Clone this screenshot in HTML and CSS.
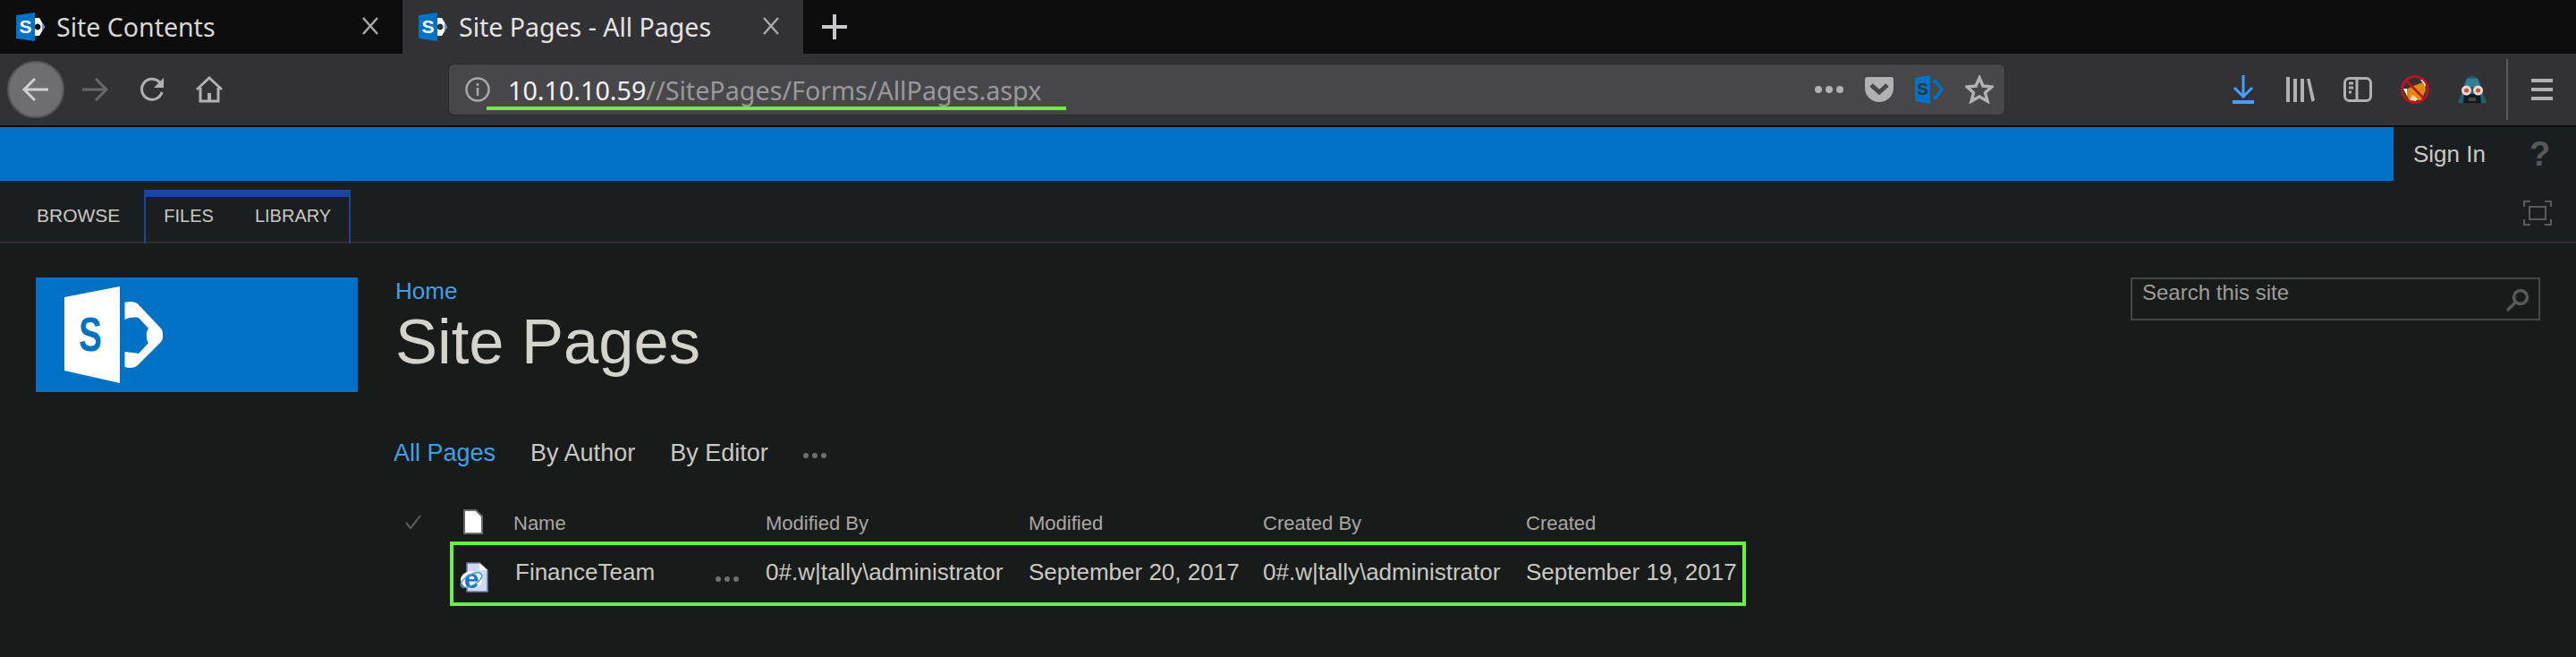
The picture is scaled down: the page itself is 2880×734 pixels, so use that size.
FILE: index.html
```html
<!DOCTYPE html>
<html lang="en">
<head>
    <meta charset="UTF-8">
    <title>Site Pages - All Pages</title>
    <link rel="stylesheet" href="styles.css">
</head>
<body>

    <!-- Tabs -->
    <div class="tabs">
        <div class="tab">
            <svg class="fav" width="32" height="32" viewBox="0 0 32 32">
                <path d="M21 6h5l6 10-6 10h-5zM24 12.500a3.500 3.500 0 1 0 .01 0z" fill="#fff" fill-rule="evenodd" stroke="none"/>
                <path d="M29 11l3 5-3 5z" fill="#4f9bd6" stroke="none"/>
                <path d="M0 3 21 0v32L0 29z" fill="#0072c6" stroke="none"/>
                <text x="10.500" y="23" class="fav-letter">S</text>
            </svg>
            <span class="tab-title">Site Contents</span>
            <svg class="tab-close" width="20" height="20" viewBox="0 0 20 20"><path d="M2 1l16 18M18 1 2 19"/></svg>
        </div>
        <div class="tab tab-active">
            <svg class="fav" width="32" height="32" viewBox="0 0 32 32">
                <path d="M21 6h5l6 10-6 10h-5zM24 12.500a3.500 3.500 0 1 0 .01 0z" fill="#fff" fill-rule="evenodd" stroke="none"/>
                <path d="M29 11l3 5-3 5z" fill="#4f9bd6" stroke="none"/>
                <path d="M0 3 21 0v32L0 29z" fill="#0072c6" stroke="none"/>
                <text x="10.500" y="23" class="fav-letter">S</text>
            </svg>
            <span class="tab-title">Site Pages - All Pages</span>
            <svg class="tab-close" width="20" height="20" viewBox="0 0 20 20"><path d="M2 1l16 18M18 1 2 19"/></svg>
        </div>
        <svg class="new-tab" width="30" height="30" viewBox="0 0 30 30"><path d="M15 1v28M1 15h28"/></svg>
    </div>

    <!-- Toolbar -->
    <div class="toolbar">
        <div class="tool tool-back">
            <svg width="32" height="32" viewBox="0 0 32 32"><path d="M30 16H4M15 4 3 16l12 12"/></svg>
        </div>
        <div class="tool tool-forward">
            <svg width="32" height="32" viewBox="0 0 32 32"><path d="M2 16h26M17 4l12 12-12 12"/></svg>
        </div>
        <div class="tool">
            <svg width="32" height="32" viewBox="0 0 32 32"><path d="M27 19a11.500 11.500 0 1 1-3-11.500L28 11"/><path class="solid" d="M29 3v11H18z"/></svg>
        </div>
        <div class="tool">
            <svg width="32" height="32" viewBox="0 0 32 32"><path d="M2 16 16 3l14 13"/><path d="M6 14v15h20V14"/><path class="solid" d="M14 20h4v9h-4z"/></svg>
        </div>

        <div class="urlbar">
            <svg class="url-info" width="28" height="28" viewBox="0 0 28 28"><circle cx="14" cy="14" r="12.500"/><path d="M14 12v9M14 7v3"/></svg>
            <div class="url-text"><span class="url-host">10.10.10.59</span>//SitePages/Forms/AllPages.aspx</div>
            <div class="url-mark"></div>
            <div class="url-action">
                <svg width="32" height="12" viewBox="0 0 32 12"><circle class="dot" cx="4" cy="6" r="4"/><circle class="dot" cx="16" cy="6" r="4"/><circle class="dot" cx="28" cy="6" r="4"/></svg>
            </div>
            <div class="url-action">
                <svg width="32" height="28" viewBox="0 0 32 28"><path class="pocket" d="M3 0h26a3 3 0 0 1 3 3v9C32 22 24 28 16 28S0 22 0 12V3a3 3 0 0 1 3-3z"/><path class="pocket-mark" d="M7 9l9 8 9-8"/></svg>
            </div>
            <div class="url-action">
                <svg width="32" height="32" viewBox="0 0 32 32">
                    <path d="M0 3 17 0v32L0 29z" fill="#0072c6" stroke="none"/>
                    <text x="8.500" y="22" class="url-letter">S</text>
                    <path d="M20 7h3l7 9-7 9h-3" stroke="#0072c6" stroke-width="3.500"/>
                </svg>
            </div>
            <div class="url-action">
                <svg width="32" height="32" viewBox="0 0 32 32"><path class="star" d="M16 3l4 9 10 1-7.500 6.500L25 29l-9-5-9 5 2.500-9.500L2 13l10-1z"/></svg>
            </div>
        </div>

        <div class="tool tool-first">
            <svg class="icon-download" width="24" height="32" viewBox="0 0 24 32"><path d="M12 0v25M2 14l10 10 10-10"/><path class="bar" d="M0 28h24v4H0z"/></svg>
        </div>
        <div class="tool">
            <svg width="32" height="28" viewBox="0 0 32 28"><path class="solid" d="M0 0h4v28H0zM8 2h4v26H8zM16 2h4v26h-4zM23 2h3.500L32 26l-3.500 2z"/></svg>
        </div>
        <div class="tool">
            <svg width="32" height="28" viewBox="0 0 32 28"><rect x="1.500" y="1.500" width="29" height="25" rx="5"/><path d="M15 2v24M6 7h5M6 12h5M6 17h3"/></svg>
        </div>
        <div class="tool">
            <svg width="32" height="32" viewBox="0 0 32 32">
                <path d="M6 16l8-4 8-3 5-1 1 9-5 11H10l-4-6z" fill="#e0890f" stroke="none"/>
                <path d="M3 15h4v8zM22 5h5l1 8z" fill="#fff" stroke="none"/>
                <path d="M10 28l3-6 6 4-2 3z" fill="#f3d9b0" stroke="none"/>
                <circle class="ban" cx="16" cy="16" r="14.500"/>
                <path class="ban" d="M6 6l20 20"/>
            </svg>
        </div>
        <div class="tool">
            <svg width="32" height="30" viewBox="0 0 32 30">
                <path d="M16 0c5 0 8 4 9 10l7 20H0l7-20c1-6 4-10 9-10z" fill="#1f5f70" stroke="none"/>
                <path d="M10 3h12l3 9H7z" fill="#2f7f92" stroke="none"/>
                <path d="M7 20h18l1 10H6z" fill="#15191c" stroke="none"/>
                <path d="M12 24h8v4h-8z" fill="#3c4a50" stroke="none"/>
                <circle cx="9.500" cy="16" r="5.500" fill="#f4d8d0" stroke="none"/>
                <circle cx="22.500" cy="16" r="5.500" fill="#f4d8d0" stroke="none"/>
                <circle cx="9.500" cy="16" r="2.500" fill="#c8503c" stroke="none"/>
                <circle cx="22.500" cy="16" r="2.500" fill="#c8503c" stroke="none"/>
            </svg>
        </div>
        <div class="tool-sep"></div>
        <div class="tool tool-menu">
            <svg width="24" height="24" viewBox="0 0 24 24"><path class="solid" d="M0 0h24v4H0zM0 10h24v4H0zM0 20h24v4H0z"/></svg>
        </div>
    </div>

    <!-- Sharepoint -->
    <div class="top-bar">
        <div class="suite-bar"></div>
        <div class="signin">
            <span>Sign In</span>
            <span class="help">?</span>
        </div>
    </div>

    <div class="ribbon">
        <a class="ribbon-tab">BROWSE</a>
        <div class="ribbon-group">
            <a class="ribbon-tab">FILES</a>
            <a class="ribbon-tab">LIBRARY</a>
        </div>
        <svg class="focus-icon" width="32" height="28" viewBox="0 0 32 28">
            <path d="M1 7V1h7M24 1h7v6M31 21v6h-7M8 27H1v-6"/>
            <rect x="7" y="7" width="18" height="14"/>
        </svg>
    </div>

    <div class="site-head">
        <div class="site-logo">
            <svg width="110" height="108" viewBox="0 0 110 108">
                <path d="M0 12 62 0v108L0 94z" fill="#fff" stroke="none"/>
                <text transform="translate(29 72) scale(.72 1)" class="logo-letter">S</text>
                <path d="M67.500 18c6-2 13-1 16 3L108 47c3 4 3 11 0 15L83 87c-3 4-10 5-15.500 3V73c6 1 12 1 15.500 2l11-12c-3-3-3-13 0-16L83 35c-3-1-10-1-15.500 2z" fill="#fff" stroke="none"/>
            </svg>
        </div>
        <div class="site-title">
            <a class="crumb">Home</a>
            <h1>Site Pages</h1>
        </div>
        <div class="site-search">
            <span>Search this site</span>
            <svg width="28" height="26" viewBox="0 0 28 26"><circle cx="17" cy="10" r="7.500"/><path d="M11 16 2 25"/></svg>
        </div>
    </div>

    <div class="views">
        <a class="view view-current">All Pages</a>
        <a class="view">By Author</a>
        <a class="view">By Editor</a>
        <span class="dots"></span>
    </div>

    <div class="list">
        <div class="row row-head">
            <svg class="check" width="18" height="16" viewBox="0 0 18 16"><path d="M1 9l5 6L17 1"/></svg>
            <svg class="doc" width="22" height="28" viewBox="0 0 22 28"><path d="M1 1h13l7 7v19H1z"/></svg>
            <span>Name</span>
            <span></span>
            <span>Modified By</span>
            <span>Modified</span>
            <span>Created By</span>
            <span>Created</span>
        </div>
        <div class="row row-item">
            <span></span>
            <svg class="page-icon" width="34" height="34" viewBox="0 0 34 34">
                <path d="M9 1h14l9 8v24H9z" fill="#cfdaf4" stroke="#6a78a8" stroke-width="1.500"/>
                <path d="M23 1v8h9z" fill="#fff"/>
                <ellipse cx="14" cy="20" rx="12" ry="10" fill="#fff"/>
                <text x="14" y="29" class="ie-letter">e</text>
                <ellipse cx="14" cy="20" rx="13" ry="6" transform="rotate(-30 14 20)" fill="none" stroke="#4a9be6" stroke-width="1.500"/>
            </svg>
            <a class="item-name">FinanceTeam</a>
            <span class="dots"></span>
            <span>0#.w|tally\administrator</span>
            <span>September 20, 2017</span>
            <span>0#.w|tally\administrator</span>
            <span>September 19, 2017</span>
            <div class="row-mark"></div>
        </div>
    </div>

</body>
</html>
```

FILE: styles.css
```css
/* General */
html, body {
    height: 734px;
    overflow: hidden;
}

body {
    margin: 0;
    background-color: #191b1b;
    color: #c9c8c3;
    font-family: "Liberation Sans", Arial, sans-serif;
    font-size: 26px;
}

svg {
    display: block;
    fill: none;
    stroke: #b1b1b3;
    stroke-width: 3;
}

.solid {
    fill: #b1b1b3;
    stroke: none;
}

.fav-letter {
    fill: #fff;
    stroke: none;
    font: bold 21px "Liberation Sans", sans-serif;
    text-anchor: middle;
}

.url-letter {
    fill: #2b3440;
    stroke: none;
    font: bold 19px "Liberation Sans", sans-serif;
    text-anchor: middle;
}

/* Tabs */
.tabs {
    display: flex;
    align-items: center;
    height: 60px;
    background-color: #0c0c0d;
}

.tab {
    display: flex;
    align-items: center;
    gap: 13px;
    width: 450px;
    height: 60px;
    padding: 0 26px 0 18px;
    box-sizing: border-box;
    color: #d7d7d8;
    font-family: "Noto Sans", sans-serif;
    font-size: 28.500px;
}

.tab + .tab {
    width: 448px;
}

.tab-active {
    background-color: #323234;
    color: #e4e4e5;
}

.tab-title {
    flex: 1;
}

.tab-close {
    margin-top: -2px;
    stroke: #a8a8aa;
    stroke-width: 2.500;
}

.new-tab {
    margin-left: 20px;
    stroke: #c8c8ca;
    stroke-width: 4;
}

/* Toolbar */
.toolbar {
    display: flex;
    align-items: center;
    height: 80px;
    padding-left: 8px;
    background-color: #323234;
    border-bottom: 2px solid #0c0c0d;
}

.tool {
    display: flex;
    align-items: center;
    justify-content: center;
    flex: none;
    width: 64px;
    height: 64px;
}

.tool-back {
    border-radius: 50%;
    background-color: #6e6e70;
    box-sizing: border-box;
    border: 2px solid #565658;
}

.tool-back svg {
    stroke: #d0d0d1;
}

.tool-forward {
    margin-left: 2px;
}

.tool-forward svg {
    stroke: #69696b;
}

.urlbar {
    position: relative;
    display: flex;
    align-items: center;
    flex: none;
    width: 1739px;
    height: 56px;
    margin-left: 236px;
    padding-left: 18px;
    box-sizing: border-box;
    background-color: #474749;
    border-radius: 6px;
    box-shadow: 0 0 0 1px #2a2a2c;
}

.url-info {
    stroke-width: 2.500;
    stroke: #a9a9ab;
}

.url-text {
    flex: 1;
    margin-left: 20px;
    color: #99999b;
    font-family: "Noto Sans", sans-serif;
    font-size: 28.700px;
}

.url-host {
    color: #f2f2f3;
}

.url-mark {
    position: absolute;
    left: 42px;
    top: 47px;
    width: 648px;
    height: 4px;
    background-color: #6bf13d;
}

.url-action {
    display: flex;
    align-items: center;
    justify-content: center;
    width: 56px;
    height: 56px;
}

.dot {
    fill: #b1b1b3;
    stroke: none;
}

.pocket {
    fill: #b1b1b3;
    stroke: none;
}

.pocket-mark {
    stroke: #474749;
    stroke-width: 5;
}

.star {
    stroke-width: 3.500;
}

.tool-first {
    margin-left: 235px;
}

.icon-download {
    stroke: #45a1ff;
}

.icon-download .bar {
    fill: #45a1ff;
    stroke: none;
}

.ban {
    stroke: #c4101c;
    stroke-width: 2.500;
}

.tool-sep {
    flex: none;
    width: 2px;
    height: 68px;
    margin-left: 6px;
    background-color: #5c5c5e;
}

.tool-menu {
    margin-left: 6px;
}

/* Suite bar */
.top-bar {
    display: flex;
    height: 60px;
}

.suite-bar {
    flex: 1;
    background-color: #0072c6;
}

.signin {
    display: flex;
    align-items: center;
    width: 204px;
    padding-left: 22px;
    box-sizing: border-box;
    background-color: #1b1e1f;
}

.help {
    margin-left: 49px;
    color: #58585a;
    font-size: 38px;
    font-weight: bold;
}

/* Ribbon */
.ribbon {
    display: flex;
    align-items: flex-end;
    height: 70px;
    padding-left: 41px;
    box-sizing: border-box;
    background-color: #1b1e1f;
    border-bottom: 2px solid #2e2e2e;
}

.ribbon-tab {
    font-size: 21px;
    line-height: 58px;
}

.ribbon-group {
    display: flex;
    gap: 46px;
    height: 60px;
    margin-bottom: -2px;
    margin-left: 27px;
    padding: 0 20px;
    box-sizing: border-box;
    border: 2px solid #17479e;
    border-top-width: 8px;
    border-bottom: none;
}

.ribbon-group .ribbon-tab {
    font-size: 20px;
    line-height: 42px;
}

.focus-icon {
    margin: 0 27px 18px auto;
    stroke: #5a5a5c;
    stroke-width: 2;
}

/* Site header */
.site-head {
    display: flex;
    align-items: flex-start;
    padding: 38px 40px 0;
}

.site-logo {
    display: flex;
    align-items: center;
    width: 360px;
    height: 128px;
    padding-left: 32px;
    box-sizing: border-box;
    background-color: #0072c6;
}

.logo-letter {
    fill: #0072c6;
    stroke: none;
    font: bold 54px "Liberation Sans", sans-serif;
    text-anchor: middle;
}

.site-title {
    margin-left: 42px;
}

.crumb {
    display: block;
    color: #3fa0e8;
    line-height: 30px;
}

h1 {
    margin: 0;
    color: #d4d3ce;
    font-size: 70.500px;
    font-weight: normal;
    line-height: 84px;
}

.site-search {
    display: flex;
    justify-content: space-between;
    width: 458px;
    height: 48px;
    margin-left: auto;
    padding: 0 9px 0 11px;
    box-sizing: border-box;
    border: 2px solid #444;
    color: #9d9c98;
    font-size: 24px;
    line-height: 30px;
}

.site-search svg {
    margin-top: 10px;
    stroke: #58585a;
    stroke-width: 3.500;
}

/* Views */
.views {
    display: flex;
    align-items: center;
    gap: 39px;
    height: 42px;
    margin: 47px 0 0 440px;
    font-size: 27px;
}

.view-current {
    color: #3fa0e8;
}

.dots {
    display: block;
    width: 6px;
    height: 6px;
    margin-top: 6px;
    border-radius: 50%;
    background-color: #6f6f6f;
    box-shadow: 10px 0 #6f6f6f, 20px 0 #6f6f6f;
}

/* List */
.list {
    margin: 33px 0 0 440px;
    width: 1512px;
}

.row {
    position: relative;
    display: grid;
    grid-template-columns: 73px 61px 224px 58px 294px 262px 294px 1fr;
    align-items: center;
}

.row-head {
    height: 45px;
    color: #a8a7a3;
    font-size: 22px;
}

.row-head span {
    padding-top: 5px;
}

.row-head .check {
    margin-left: 13px;
    stroke: #5e5e5e;
    stroke-width: 2;
}

.doc {
    margin-left: 5px;
    fill: #fff;
    stroke: #6a6a6a;
    stroke-width: 2;
}

.row-item {
    height: 72px;
}

.row-item span,
.item-name {
    margin-top: -3px;
}

.page-icon {
    margin-top: 8px;
    stroke: none;
}

.ie-letter {
    fill: #1c74c8;
    font: bold 30px "Liberation Sans", sans-serif;
    text-anchor: middle;
}

.item-name {
    margin-left: 2px;
}

.row-item .dots {
    margin: 12px 0 0 2px;
}

.row-mark {
    position: absolute;
    top: 0;
    right: 0;
    bottom: 0;
    left: 63px;
    border: 4px solid #6bf13d;
}
```
